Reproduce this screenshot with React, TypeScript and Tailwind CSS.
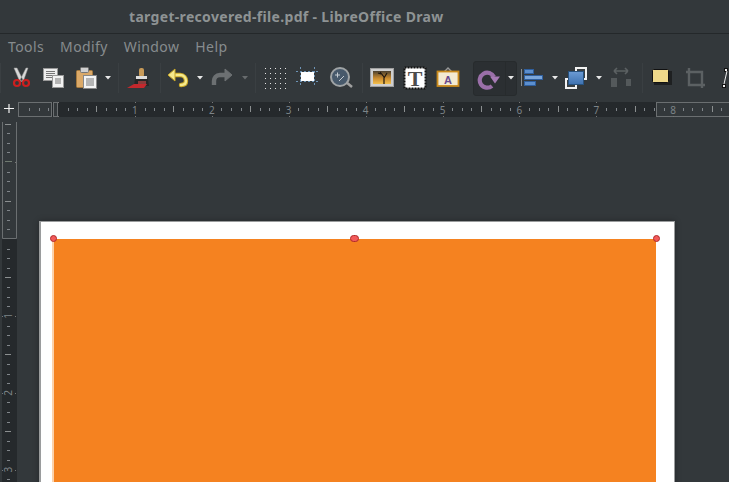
import type { ReactNode } from 'react';

const menus = ['Tools', 'Modify', 'Window', 'Help'];

// 8 ticks per inch, 76.9px per inch
const INCH = 76.9;

function HRuler() {
  const ticks = [];
  for (let i = -4; i < 70; i++) {
    const x = 58 + (i * INCH) / 8;
    if (x < 20 || x > 729) continue;
    if (i % 8 === 0) {
      ticks.push(<rect key={i} x={Math.round(x)} y={0} width={1} height={1} fill="#777" />);
      ticks.push(<rect key={`b${i}`} x={Math.round(x)} y={14} width={1} height={1} fill="#777" />);
      continue;
    }
    const long = i % 4 === 0;
    ticks.push(
      <rect key={i} x={Math.round(x)} y={long ? 4 : 6} width={1} height={long ? 6 : 3} fill={long ? '#8b8f90' : '#80858a'} />,
    );
  }
  return (
    <svg width={729} height={15} className="block">
      <rect x={18} y={0} width={711} height={15} fill="#25292c" />
      <rect x={18} y={0} width={34} height={15} fill="#33383b" />
      <rect x={18.5} y={0.5} width={33} height={14} fill="none" stroke="#6b6f71" />
      <rect x={53.5} y={0.5} width={4} height={14} fill="#33383b" stroke="#6b6f71" />
      <rect x={656} y={0} width={73} height={15} fill="#33383b" />
      <rect x={656.5} y={0.5} width={80} height={14} fill="none" stroke="#6b6f71" />
      {ticks}
      {[1, 2, 3, 4, 5, 6, 7, 8].map((n) => (
        <text key={n} x={58 + n * INCH} y={11.5} textAnchor="middle" fontSize={10} fontFamily="'Noto Sans', sans-serif" fill="#7d8488">
          {n}
        </text>
      ))}
      <path d="M4 6.5h10M9 2v9" stroke="#f2f2f2" strokeWidth={1.2} />
    </svg>
  );
}

function VRuler() {
  const ticks = [];
  for (let i = -12; i < 30; i++) {
    const y = 122 + (i * INCH) / 8;
    if (i === 0) continue;
    if (i % 8 === 0) {
      ticks.push(<rect key={`a${i}`} x={2} y={Math.round(y)} width={1} height={1} fill="#777" />);
      ticks.push(<rect key={`b${i}`} x={15} y={Math.round(y)} width={1} height={1} fill="#777" />);
      continue;
    }
    const long = i % 4 === 0;
    ticks.push(
      <rect key={i} x={long ? 5 : 7} y={Math.round(y)} width={long ? 6 : 3} height={1} fill={long ? '#8b8f90' : '#80858a'} />,
    );
  }
  return (
    <svg width={18} height={365} className="block">
      <rect x={2} y={0} width={15} height={365} fill="#25292c" />
      <rect x={2} y={0} width={15} height={121} fill="#33383b" />
      <path d="M2.5 5v116.5h14V5" fill="none" stroke="#6b6f71" />
      <rect x={5} y={44} width={7} height={1} fill="#6f7a70" />
      {ticks}
      {[1, 2, 3].map((n) => (
        <text
          key={n}
          x={9}
          y={122 + n * INCH}
          textAnchor="middle"
          dominantBaseline="middle"
          fontSize={10}
          fontFamily="'Noto Sans', sans-serif"
          fill="#7d8488"
          transform={`rotate(-90 9 ${122 + n * INCH})`}
        >
          {n}
        </text>
      ))}
    </svg>
  );
}

function Icon({ w = 24, children }: { w?: number; children: ReactNode }) {
  return (
    <svg width={w} height={24} viewBox={`0 0 ${w} 24`} className="block shrink-0">
      {children}
    </svg>
  );
}

function Caret({ color = '#e8e8e8' }: { color?: string }) {
  return (
    <svg width={6} height={4} className="block shrink-0">
      <path d="M0 0h6L3 3.5z" fill={color} />
    </svg>
  );
}

function Sep() {
  return <div className="h-[30px] w-px shrink-0 bg-[#3a3f42]" />;
}

function Cut() {
  return (
    <Icon>
      <path d="M5 2l3 0 6 12-3 2zM19 2h-2l-6 12 3 2z" fill="#d8d8d8" stroke="#9a9a9a" strokeWidth={0.5} />
      <circle cx={8} cy={17} r={3} fill="none" stroke="#cc1f1f" strokeWidth={2.2} />
      <circle cx={17} cy={17} r={3} fill="none" stroke="#cc1f1f" strokeWidth={2.2} />
    </Icon>
  );
}

function Copy() {
  return (
    <Icon>
      <rect x={2.5} y={2.5} width={14} height={12} fill="#eeeeee" stroke="#999" />
      <path d="M5 5.5h9M5 7.5h9M5 9.5h9M5 11.5h6" stroke="#777" />
      <rect x={11.5} y={9.5} width={11} height={12} fill="#f2f2f2" stroke="#999" />
      <path d="M14 13h6M14 15h6M14 17h6" stroke="#777" />
    </Icon>
  );
}

function Paste() {
  return (
    <Icon>
      <rect x={2.5} y={4.5} width={16} height={17} rx={1} fill="#dba968" stroke="#a5793d" />
      <rect x={6.5} y={1.5} width={8} height={5} rx={1} fill="#d0d0d0" stroke="#777" />
      <rect x={9.5} y={9.5} width={13} height={13} fill="#f4f4f4" stroke="#888" />
      <path d="M12 13h8M12 15h8M12 17h8M12 19h8" stroke="#777" />
    </Icon>
  );
}

function Brush() {
  return (
    <Icon>
      <rect x={13} y={2} width={5} height={9} rx={2} fill="#c79a58" />
      <rect x={10} y={10} width={11} height={3} fill="#ddd" />
      <path d="M9 13h13l1 7H8z" fill="#262626" />
      <path d="M12 15h8v3h-8z" fill="#8c3b3b" />
      <path d="M1 22l7-4h13l-3 4z" fill="#c4282d" />
    </Icon>
  );
}

function Undo() {
  return (
    <Icon>
      <path d="M9 9h6c4 0 6 3 6 6s-2 4-5 4" fill="none" stroke="#c9a828" strokeWidth={4.4} strokeLinecap="round" />
      <path d="M9 9h6c4 0 6 3 6 6s-2 4-5 4" fill="none" stroke="#f6ea8e" strokeWidth={2.4} strokeLinecap="round" />
      <path d="M3 9l7-6v12z" fill="#f6ea8e" stroke="#c9a828" strokeLinejoin="round" />
    </Icon>
  );
}

function Redo() {
  return (
    <Icon>
      <path d="M15 9h-5c-4 0-6 3-6 6v4" fill="none" stroke="#6c7072" strokeWidth={4.4} />
      <path d="M22 9l-7-6v12z" fill="#6c7072" stroke="#6c7072" strokeLinejoin="round" />
    </Icon>
  );
}

function Grid() {
  const dots = [];
  for (let r = 0; r < 5; r++) {
    for (let c = 0; c < 5; c++) {
      dots.push(<rect key={`${r}-${c}`} x={1 + c * 5} y={2 + r * 5} width={1} height={1} fill="#e8e8e8" />);
    }
  }
  return <Icon>{dots}</Icon>;
}

function Helplines() {
  return (
    <Icon>
      <path d="M0 5.5h23M0 15.5h23M4.5 1v19M18.5 1v19" stroke="#6d93b5" strokeDasharray="2 2" />
      <rect x={5} y={6} width={13} height={9} fill="#fff" />
    </Icon>
  );
}

function Zoom() {
  return (
    <Icon>
      <path d="M17 16l6 5" stroke="#a0a0a0" strokeWidth={2.5} />
      <circle cx={11} cy={11} r={9} fill="#47596b" stroke="#9fa3a5" strokeWidth={2} />
      <path d="M6 9h5M8.5 6.5v5M10 15l5-5" stroke="#c5ccd2" />
    </Icon>
  );
}

function Picture() {
  return (
    <Icon>
      <defs>
        <linearGradient id="sky" x1="0" y1="0" x2="0" y2="1">
          <stop offset="0" stopColor="#4a4030" />
          <stop offset="0.55" stopColor="#c98a2e" />
          <stop offset="1" stopColor="#f3c04f" />
        </linearGradient>
      </defs>
      <rect x={0.5} y={2.5} width={23} height={18} fill="#cfcfcf" stroke="#a0a0a0" />
      <rect x={3} y={5} width={18} height={13} fill="url(#sky)" />
      <path d="M14 18v-7l-4-5M14 12l3-5M11 8l-3-1" stroke="#1f1710" strokeWidth={1.2} fill="none" />
    </Icon>
  );
}

function TextBox() {
  return (
    <Icon>
      <rect x={1.5} y={1.5} width={21} height={21} fill="#fff" stroke="#111" strokeWidth={2} strokeDasharray="2 1" />
      <text x={12} y={19.5} textAnchor="middle" fontSize={22} fontWeight={700} fontFamily="'Liberation Serif', serif" fill="#4c4c4c">
        T
      </text>
    </Icon>
  );
}

function Callout() {
  return (
    <Icon>
      <path d="M8 6l4-4 4 4" fill="none" stroke="#999" strokeWidth={1.4} />
      <rect x={1.5} y={5.5} width={21} height={14.5} fill="#f3ead2" stroke="#c98a1c" strokeWidth={1.8} />
      <text x={12} y={17.5} textAnchor="middle" fontSize={11} fontWeight={700} fontFamily="'Liberation Sans', sans-serif" fill="#6a4a8c">
        A
      </text>
    </Icon>
  );
}

function Rotate() {
  return (
    <Icon>
      <path d="M17 11A7.5 7.5 0 1 0 15 20" fill="none" stroke="#9a6fa8" strokeWidth={4.2} />
      <path d="M13 10.5h10l-5 7z" fill="#a67bb4" />
    </Icon>
  );
}

function Align() {
  return (
    <Icon>
      <path d="M1.5 3v17" stroke="#8a8f92" />
      <rect x={4.5} y={3.5} width={9} height={4} fill="#5c8fce" stroke="#2f5f9e" />
      <rect x={4.5} y={9.5} width={18} height={4} fill="#7ba6da" stroke="#2f5f9e" />
      <rect x={4.5} y={15.5} width={11} height={4} fill="#5c8fce" stroke="#2f5f9e" />
    </Icon>
  );
}

function Arrange() {
  return (
    <Icon>
      <defs>
        <linearGradient id="blue" x1="0" y1="0" x2="0" y2="1">
          <stop offset="0" stopColor="#6c9bd4" />
          <stop offset="1" stopColor="#3f72b0" />
        </linearGradient>
      </defs>
      <rect x={12} y={2} width={10} height={11} fill="#3a3f42" stroke="#f2f2f2" strokeWidth={2} />
      <rect x={2} y={13} width={10} height={9} fill="#3a3f42" stroke="#f2f2f2" strokeWidth={2} />
      <rect x={4.5} y={5.5} width={15} height={13} fill="url(#blue)" stroke="#27527f" />
    </Icon>
  );
}

function Distribute() {
  return (
    <Icon>
      <path d="M4 5h14M4 5l3-3M4 5l3 3M18 5l-3-3M18 5l-3 3" stroke="#5c6163" strokeWidth={1.6} fill="none" />
      <rect x={1} y={12} width={6} height={9} fill="#54595b" />
      <rect x={16} y={13} width={5} height={7} fill="#54595b" />
    </Icon>
  );
}

function Shadow() {
  return (
    <Icon>
      <rect x={4} y={5} width={18} height={14} fill="#111" opacity={0.6} />
      <rect x={2.5} y={3.5} width={16} height={13} rx={1} fill="#efd98a" stroke="#111" />
    </Icon>
  );
}

function Crop() {
  return (
    <Icon>
      <path d="M5 2v17h16M2 6h16v16" fill="none" stroke="#5c6163" strokeWidth={2.4} />
    </Icon>
  );
}

function Flip() {
  return (
    <Icon w={8}>
      <rect x={2.5} y={2.5} width={3} height={3} fill="#eee" stroke="#111" />
      <path d="M5 5L2 18" stroke="#eee" />
      <rect x={0.5} y={18.5} width={3} height={3} fill="#eee" stroke="#111" />
    </Icon>
  );
}

export default function App() {
  return (
    <div className="flex h-[482px] w-[729px] flex-col overflow-hidden bg-[#33383b] font-['Noto_Sans',sans-serif]">
      {/* Title bar */}
      <div className="flex h-[34px] shrink-0 items-center border-b border-[#24282a] bg-[#33383b] pl-[129px]">
        <span className="text-[14px] font-bold tracking-[0.32px] text-[#8e9394]">target-recovered-file.pdf - LibreOffice Draw</span>
      </div>

      {/* Menu */}
      <div className="flex h-[27px] shrink-0 items-center gap-[16px] pb-[2px] pl-[8px] text-[14px] tracking-[0.4px] text-[#878c8e]">
        {menus.map((m) => (
          <span key={m}>{m}</span>
        ))}
      </div>

      {/* Toolbar */}
      <div className="flex h-[41px] shrink-0 items-center overflow-hidden pb-[7px]">
        <Sep />
        <div className="ml-[8px]"><Cut /></div>
        <div className="ml-[8px]"><Copy /></div>
        <div className="ml-[9px]"><Paste /></div>
        <div className="ml-[7px]"><Caret /></div>
        <div className="ml-[7px]"><Sep /></div>
        <div className="ml-[7px]"><Brush /></div>
        <div className="ml-[10px]"><Sep /></div>
        <div className="ml-[4px]"><Undo /></div>
        <div className="ml-[8px]"><Caret /></div>
        <div className="ml-[7px]"><Redo /></div>
        <div className="ml-[8px]"><Caret color="#676b6d" /></div>
        <div className="ml-[7px]"><Sep /></div>
        <div className="ml-[8px]"><Grid /></div>
        <div className="ml-[8px]"><Helplines /></div>
        <div className="ml-[9px]"><Zoom /></div>
        <div className="ml-[9px]"><Sep /></div>
        <div className="ml-[7px]"><Picture /></div>
        <div className="ml-[9px]"><TextBox /></div>
        <div className="ml-[9px]"><Callout /></div>
        <div className="ml-[13px] flex h-[35px] w-[44px] shrink-0 items-center rounded-[3px] border border-[#272b2d] bg-[#2b2f32]">
          <div className="ml-[3px]"><Rotate /></div>
          <div className="ml-[4px] flex h-full items-center border-l border-[#272b2d] pl-[2px]">
            <Caret />
          </div>
        </div>
        <div className="ml-[3px]"><Align /></div>
        <div className="ml-[8px]"><Caret /></div>
        <div className="ml-[6px]"><Arrange /></div>
        <div className="ml-[8px]"><Caret /></div>
        <div className="ml-[8px]"><Distribute /></div>
        <div className="ml-[8px]"><Sep /></div>
        <div className="ml-[7px]"><Shadow /></div>
        <div className="ml-[10px]"><Crop /></div>
        <div className="ml-[14px]"><Flip /></div>
      </div>

      {/* Horizontal ruler */}
      <div className="shrink-0">
        <HRuler />
      </div>

      {/* Workspace */}
      <div className="flex min-h-0 flex-1 overflow-hidden">
        <div className="shrink-0">
          <VRuler />
        </div>
        <div className="ml-[21px] mt-[104px] w-[636px] shrink-0">
          <div className="relative h-[300px] border-l-2 border-r border-t border-[#9a9c9d] bg-white pl-[13px] pr-[18px] pt-[17px] shadow-[0_0_6px_rgba(0,0,0,0.3)]">
            <div className="h-full bg-[#f58220] shadow-[-2px_0_0_#fbd2ac]" />
            <div className="absolute left-[9px] top-[13px] size-[7px] rounded-full border border-[#b02a2a] bg-[#f25a5a]" />
            <div className="absolute left-[309px] top-[13px] h-[7px] w-[9px] rounded-full border border-[#b02a2a] bg-[#f25a5a]" />
            <div className="absolute left-[612px] top-[13px] size-[7px] rounded-full border border-[#b02a2a] bg-[#f25a5a]" />
          </div>
        </div>
      </div>
    </div>
  );
}
